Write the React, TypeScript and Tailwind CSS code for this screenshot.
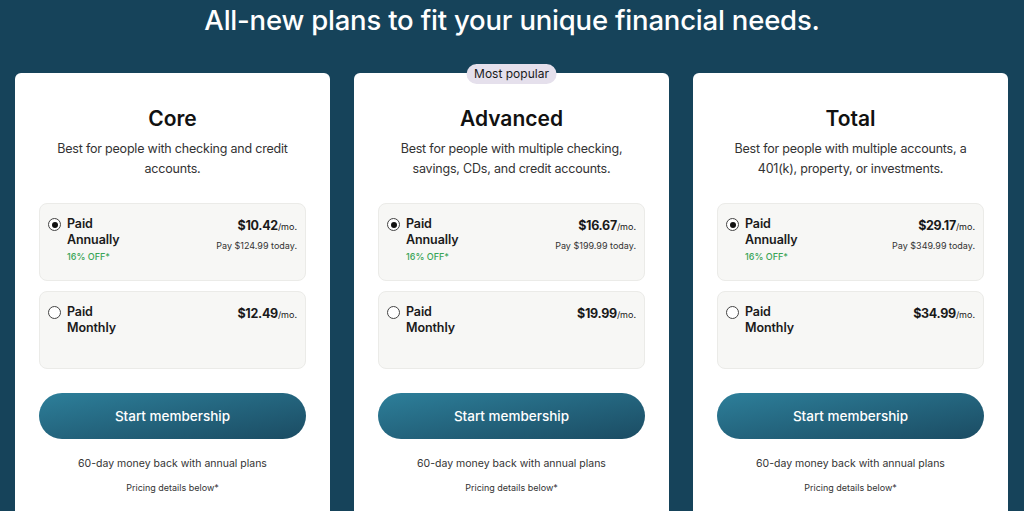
const PLANS = [
  {
    name: 'Core',
    desc: 'Best for people with checking and credit accounts.',
    annual: '$10.42',
    today: '$124.99',
    monthly: '$12.49',
  },
  {
    name: 'Advanced',
    desc: 'Best for people with multiple checking, savings, CDs, and credit accounts.',
    annual: '$16.67',
    today: '$199.99',
    monthly: '$19.99',
    popular: true,
  },
  {
    name: 'Total',
    desc: 'Best for people with multiple accounts, a 401(k), property, or investments.',
    annual: '$29.17',
    today: '$349.99',
    monthly: '$34.99',
  },
];

function Radio({ checked }: { checked?: boolean }) {
  return (
    <span className="mt-[2px] flex h-[13px] w-[13px] shrink-0 items-center justify-center rounded-full border border-[#444444] bg-white">
      {checked && <span className="h-[6px] w-[6px] rounded-full bg-[#111111]" />}
    </span>
  );
}

function Option({
  checked,
  label,
  price,
  today,
}: {
  checked?: boolean;
  label: string;
  price: string;
  today?: string;
}) {
  return (
    <div className="flex h-[78px] justify-between rounded-lg border border-[#ebebe8] bg-[#f7f7f5] pt-[12px] pl-[8px] pr-[8px]">
      <div className="flex gap-[6px]">
        <Radio checked={checked} />
        <div>
          <div className="text-[12.5px] leading-[16px] font-semibold tracking-[-0.1px] text-[#1a1a1a]">
            Paid
            <br />
            {label}
          </div>
          {today && (
            <div className="mt-[3px] text-[9px] leading-[12px] font-medium text-[#3aa557]">
              16% OFF*
            </div>
          )}
        </div>
      </div>
      <div className="text-right">
        <div className="leading-[16px] text-[#1a1a1a]">
          <span className="text-[12.5px] font-bold tracking-[-0.3px]">{price}</span>
          <span className="text-[9px]">/mo.</span>
        </div>
        {today && (
          <div className="mt-[5px] text-[9px] leading-[12px] text-[#333333]">Pay {today} today.</div>
        )}
      </div>
    </div>
  );
}

export default function App() {
  return (
    <div
      className="h-[511px] w-[1024px] overflow-hidden bg-[#16435a] text-[#1a1a1a]"
      style={{ fontFamily: 'Inter, "Noto Sans", sans-serif' }}
    >
      <h1 className="pt-[3px] text-center text-[27.5px] leading-[34px] font-medium tracking-[-0.2px] text-white">
        All-new plans to fit your unique financial needs.
      </h1>

      <div className="mt-[36px] flex gap-[24px] px-[15px]">
        {PLANS.map((p) => (
          <div
            key={p.name}
            className="relative h-[460px] w-[315px] rounded-md bg-white px-[24px] pt-[32px]"
          >
            {p.popular && (
              <div className="absolute top-[-9px] left-1/2 -translate-x-1/2 rounded-full bg-[#e5e0ec] px-[8px] py-[2px] text-[12px] leading-[16px] text-[#1a1a1a]">
                Most popular
              </div>
            )}
            <h2 className="text-center text-[21px] leading-[28px] font-semibold text-[#111111]">
              {p.name}
            </h2>
            <p className="mx-auto mt-[6px] max-w-[244px] text-center text-[12.5px] leading-[19.5px] tracking-[-0.2px] text-[#333333]">
              {p.desc}
            </p>

            <div className="mt-[25px] flex flex-col gap-[10px]">
              <Option checked label="Annually" price={p.annual} today={p.today} />
              <Option label="Monthly" price={p.monthly} />
            </div>

            <button className="mt-[24px] h-[46px] w-full rounded-full bg-gradient-to-br from-[#2d7f9a] to-[#1b4c63] text-[13.5px] font-medium text-white">
              Start membership
            </button>

            <p className="mt-[17px] text-center text-[10.5px] leading-[16px] text-[#333333]">
              60-day money back with annual plans
            </p>
            <p className="mt-[9px] text-center text-[9px] leading-[14px] text-[#333333]">
              Pricing details below*
            </p>
          </div>
        ))}
      </div>
    </div>
  );
}
